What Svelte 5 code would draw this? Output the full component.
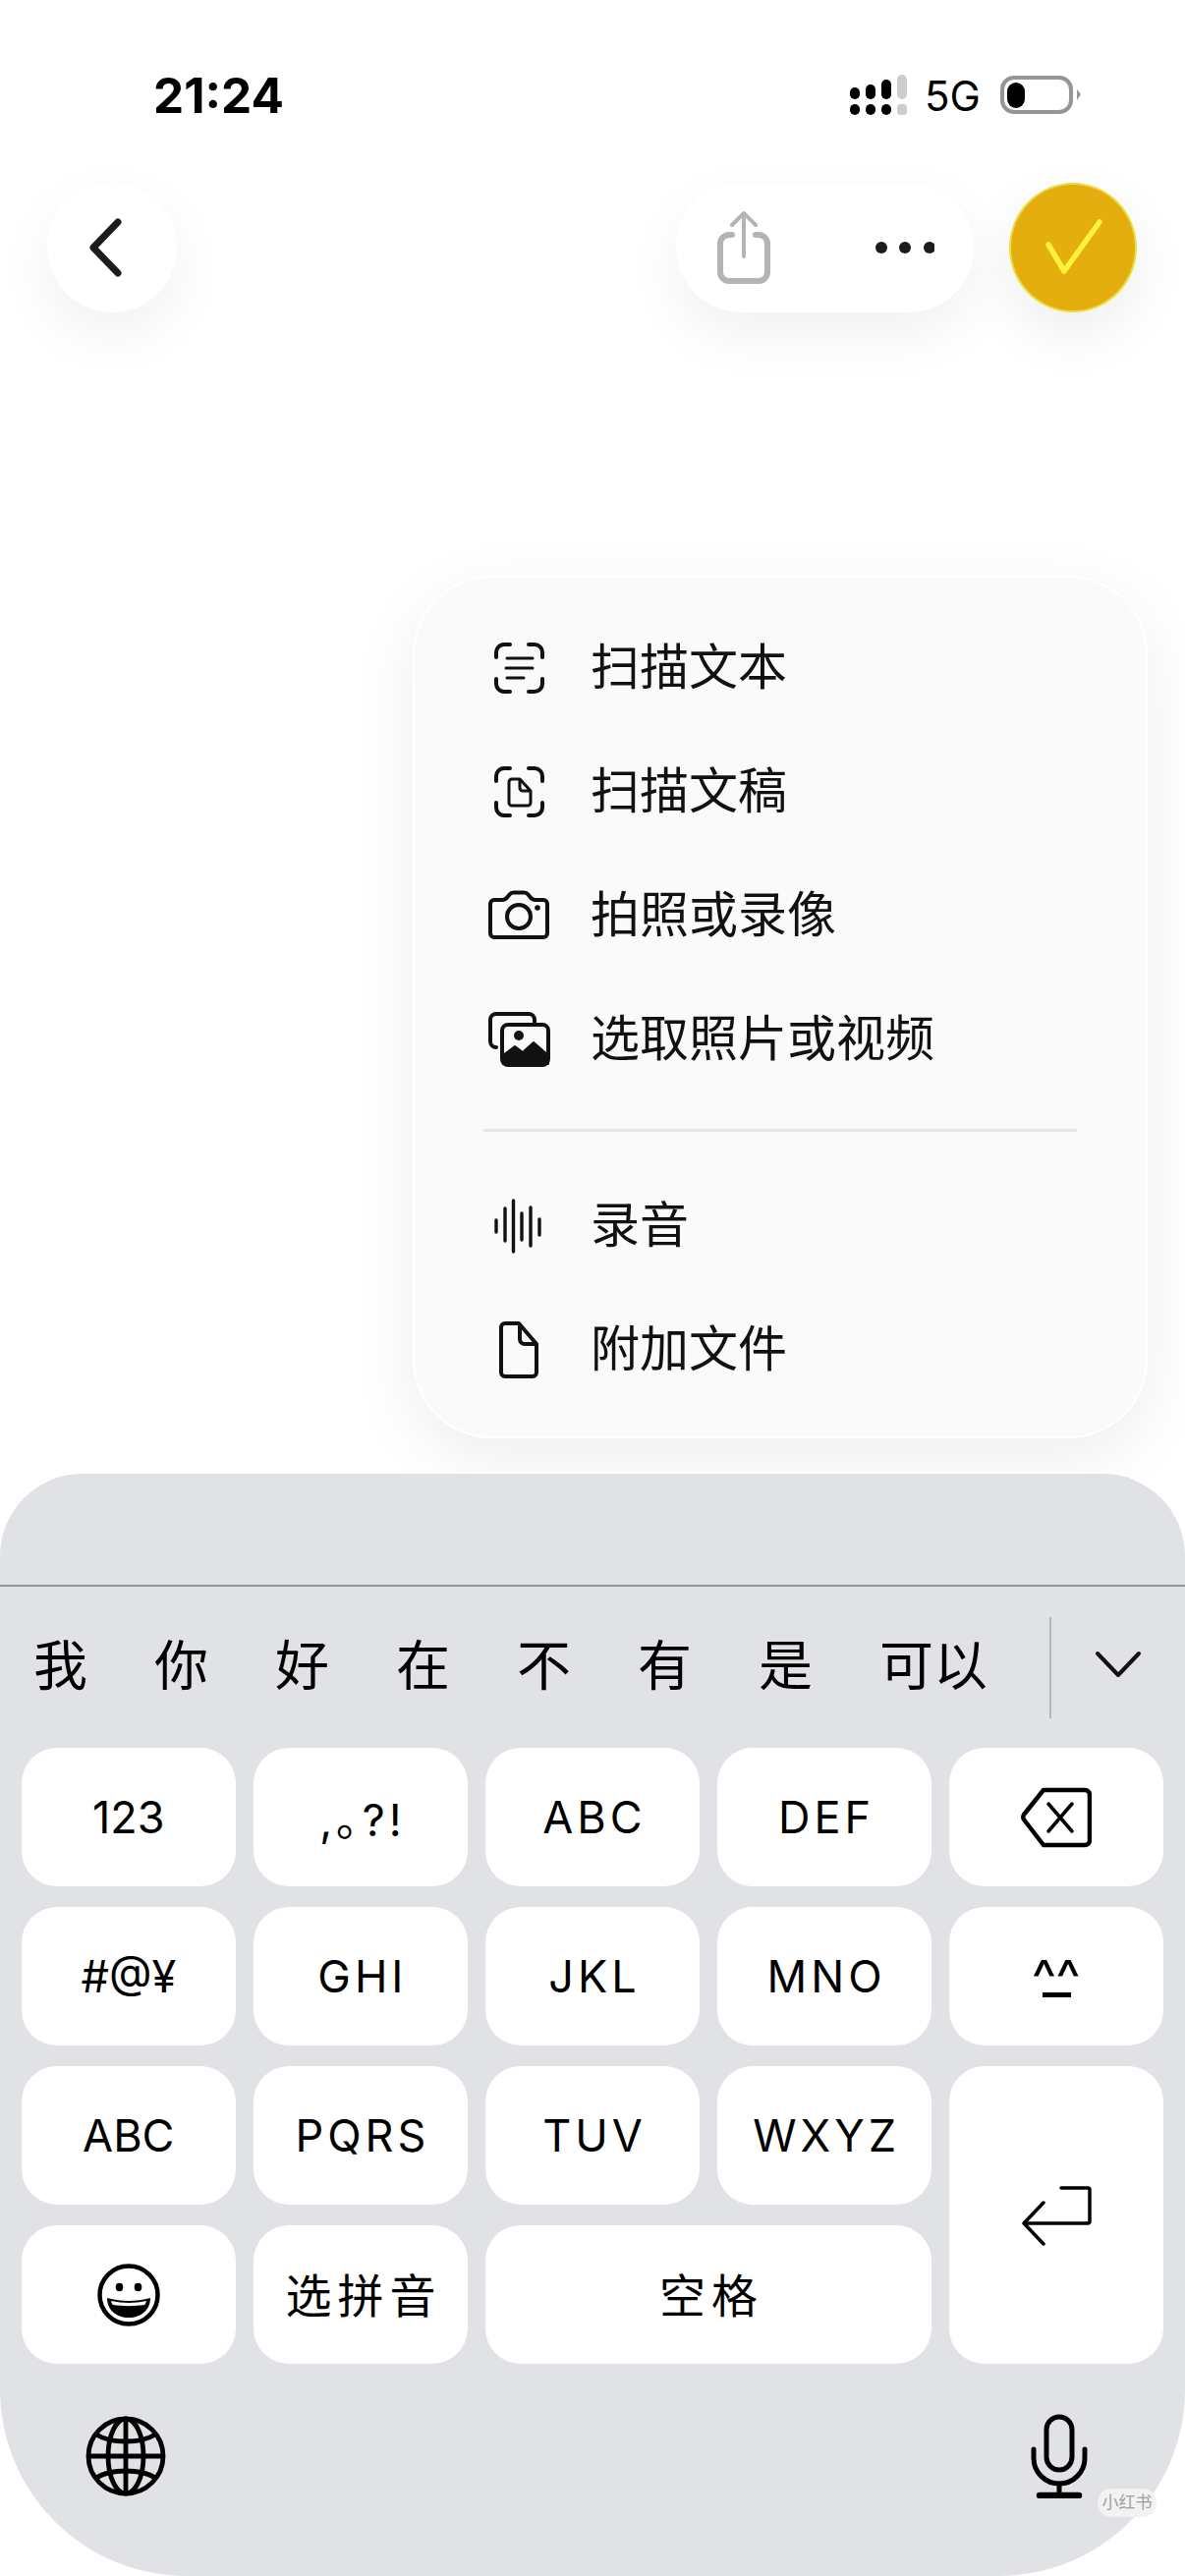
<script>
	const menuTop = [
		{ icon: 'scanText', label: '扫描文本' },
		{ icon: 'scanDoc', label: '扫描文稿' },
		{ icon: 'camera', label: '拍照或录像' },
		{ icon: 'photos', label: '选取照片或视频' }
	];
	const menuBottom = [
		{ icon: 'wave', label: '录音' },
		{ icon: 'file', label: '附加文件' }
	];
	const candidates = ['我', '你', '好', '在', '不', '有', '是', '可以'];
	const row1 = ['123', ',｡?!', 'ABC', 'DEF'];
	const row2 = ['#@¥', 'GHI', 'JKL', 'MNO'];
	const row3 = ['ABC', 'PQRS', 'TUV', 'WXYZ'];
</script>

{#snippet menuIcon(name)}
	<svg class="menu-icon" viewBox="0 0 72 60" fill="none" stroke="#111" stroke-width="3.4" stroke-linecap="round" stroke-linejoin="round">
		{#if name === 'scanText' || name === 'scanDoc'}
			<path d="M13 19v-5a8 8 0 0 1 8-8h6M60 19v-5a8 8 0 0 0-8-8h-6M13 41v5a8 8 0 0 0 8 8h6M60 41v5a8 8 0 0 1-8 8h-6" stroke-width="4" />
			{#if name === 'scanText'}
				<path d="M24 20h26M23 30h27M24 40h17" stroke-width="3" />
			{:else}
				<path d="M29 17h8l11 12v12a3 3 0 0 1-3 3H29a3 3 0 0 1-3-3V20a3 3 0 0 1 3-3zM37 18v8a3 3 0 0 0 3 3h8" stroke-width="3" />
			{/if}
		{:else if name === 'camera'}
			<path d="M11 14h8c3 0 4-1 5.500-3l2-2.500c1-1.200 2.500-2 4-2h11c1.500 0 3 .8 4 2l2 2.500c1.500 2 2.500 3 5.500 3h8a4 4 0 0 1 4 4v30a4 4 0 0 1-4 4H11a4 4 0 0 1-4-4V18a4 4 0 0 1 4-4z" stroke-width="4" />
			<circle cx="36" cy="31" r="12" stroke-width="4" />
			<circle cx="55" cy="22" r="2.800" fill="#111" stroke="none" />
		{:else if name === 'photos'}
			<path d="M13 38a6 6 0 0 1-6-6V10a6 6 0 0 1 6-6h33a6 6 0 0 1 6 6v3" stroke-width="4" />
			<rect x="19" y="15" width="47" height="41" rx="6" stroke-width="4" />
			<path d="M20 55V46l12-9 8 6 11-10 15 13v9z" fill="#111" stroke="#111" stroke-width="2" />
			<circle cx="36" cy="26" r="5" fill="#111" stroke="none" />
		{:else if name === 'wave'}
			<path d="M13 24v12M22 12v33M30.500 4v52M39 17v27M48 11v39M57 23v16" stroke-width="3.400" />
		{:else if name === 'file'}
			<path d="M22 3h14l18 21v29a4 4 0 0 1-4 4H22a4 4 0 0 1-4-4V7a4 4 0 0 1 4-4zM37 4v15a5 5 0 0 0 5 5h12" stroke-width="4" />
		{/if}
	</svg>
{/snippet}

<div class="page">
	<header class="status">
		<span class="time">21:24</span>
		<div class="status-right">
			<svg width="60" height="42" viewBox="0 0 60 42">
				<rect x="0" y="13" width="10" height="12" rx="5" fill="#000" />
				<rect x="0" y="30" width="10" height="11" rx="5" fill="#000" />
				<rect x="16" y="10" width="10" height="15" rx="5" fill="#000" />
				<rect x="16" y="30" width="10" height="11" rx="5" fill="#000" />
				<rect x="32" y="5" width="10" height="20" rx="5" fill="#000" />
				<rect x="32" y="30" width="10" height="11" rx="5" fill="#000" />
				<rect x="48" y="0" width="10" height="25" rx="5" fill="#cdcdcd" />
				<rect x="48" y="30" width="10" height="11" rx="3.500" fill="#cdcdcd" />
			</svg>
			<span class="net">5G</span>
			<svg width="84" height="40" viewBox="0 0 84 40">
				<rect x="2" y="2" width="70" height="35" rx="12" fill="none" stroke="#959595" stroke-width="4" />
				<rect x="7" y="7" width="18" height="26" rx="9" fill="#000" />
				<path d="M78 14l4 5-4 6z" fill="#959595" />
			</svg>
		</div>
	</header>

	<nav class="nav">
		<button class="round" aria-label="返回">
			<svg width="44" height="62" viewBox="0 0 44 62" fill="none" stroke="#1c1c1e" stroke-width="7" stroke-linecap="round" stroke-linejoin="round">
				<path d="M33 5 8 31l25 26" />
			</svg>
		</button>
		<div class="nav-right">
			<div class="pill">
				<svg width="62" height="76" viewBox="0 0 60 76" fill="none" stroke="#b4b4b4" stroke-width="5" stroke-linecap="round" stroke-linejoin="round">
					<path d="M18 25h-3a9 9 0 0 0-9 9v29a9 9 0 0 0 9 9h30a9 9 0 0 0 9-9V34a9 9 0 0 0-9-9h-3" stroke-width="6" />
					<path d="M30 47V4M18 15 30 3l12 12" stroke-width="4" />
				</svg>
				<svg width="60" height="14" viewBox="0 0 60 14" fill="#1c1c1e">
					<circle cx="6" cy="7" r="6" />
					<circle cx="30" cy="7" r="6" />
					<circle cx="55" cy="7" r="6" />
				</svg>
			</div>
			<button class="done" aria-label="完成">
				<svg width="60" height="60" viewBox="0 0 60 60" fill="none" stroke="#fff23a" stroke-width="5.500" stroke-linecap="round" stroke-linejoin="round">
					<path d="M5 27 21 54 57 4" />
				</svg>
			</button>
		</div>
	</nav>

	<section class="menu">
		{#each menuTop as item}
			<div class="menu-row">
				{@render menuIcon(item.icon)}
				<span>{item.label}</span>
			</div>
		{/each}
		<div class="divider"></div>
		{#each menuBottom as item}
			<div class="menu-row">
				{@render menuIcon(item.icon)}
				<span>{item.label}</span>
			</div>
		{/each}
	</section>

	<section class="keyboard">
		<div class="kb-top"></div>
		<div class="candidates">
			<div class="cand-list">
				{#each candidates as c}
					<span>{c}</span>
				{/each}
			</div>
			<div class="cand-more">
				<svg width="48" height="28" viewBox="0 0 48 28" fill="none" stroke="#111" stroke-width="4" stroke-linecap="round" stroke-linejoin="round">
					<path d="M3 3 24 25 45 3" />
				</svg>
			</div>
		</div>

		<div class="keys">
			{#each row1 as k, i}
				<div class="key" class:spaced={i > 0}>{k}</div>
			{/each}
			<div class="key" aria-label="删除">
				<svg width="72" height="62" viewBox="0 0 72 62" fill="none" stroke="#000" stroke-linejoin="round">
					<path d="M23 3h42a5 5 0 0 1 5 5v46a5 5 0 0 1-5 5H23L3 33a5 5 0 0 1 0-5z" stroke-width="4.500" />
					<path d="M28 17l24 28M52 17 28 45" stroke-width="3.500" stroke-linecap="round" />
				</svg>
			</div>

			{#each row2 as k, i}
				<div class="key" class:spaced={i > 0}>{k}</div>
			{/each}
			<div class="key kaomoji">
				<span>^^</span>
				<i></i>
			</div>

			{#each row3 as k, i}
				<div class="key" class:spaced={i > 0}>{k}</div>
			{/each}
			<div class="key enter" aria-label="换行">
				<svg width="72" height="62" viewBox="0 0 72 62" fill="none" stroke="#000" stroke-width="3.500" stroke-linecap="round" stroke-linejoin="round">
					<path d="M41 3h27a2 2 0 0 1 2 2v32a2 2 0 0 1-2 2H3M23 18 3 39l20 21" />
				</svg>
			</div>

			<div class="key" aria-label="表情">
				<svg width="66" height="68" viewBox="0 0 66 68">
					<circle cx="33" cy="34" r="29.500" fill="#fff" stroke="#000" stroke-width="4.500" />
					<ellipse cx="23.500" cy="26" rx="3.800" ry="4.200" fill="#000" />
					<ellipse cx="42.500" cy="26" rx="3.800" ry="4.200" fill="#000" />
					<path d="M11 37c7 2 15 3 22 3s15-1 22-3c0 12-9 20-22 20S11 49 11 37z" fill="#000" />
					<path d="M15 40c6 1 12 2 18 2s12-1 18-2c-.5 2-1 3-2 4-10 1.500-22 1.500-32 0-1-1-1.500-2-2-4z" fill="#fff" />
				</svg>
			</div>
			<div class="key cn spaced"><span>选拼音</span></div>
			<div class="key wide cn spaced"><span>空格</span></div>
		</div>

		<div class="kb-bottom">
			<svg width="84" height="84" viewBox="0 0 84 84" fill="none" stroke="#000" stroke-width="4.800">
				<circle cx="42" cy="42" r="38" />
				<ellipse cx="42" cy="42" rx="18" ry="38" />
				<path d="M42 4v76M4 42h76M12 20c8 5 18 7 30 7s22-2 30-7M12 64c8-5 18-7 30-7s22 2 30 7" />
			</svg>
			<svg width="60" height="86" viewBox="0 0 60 86" fill="none" stroke="#000" stroke-linecap="round">
				<rect x="17" y="3" width="26" height="54" rx="13" stroke-width="5" />
				<path d="M4 36v9a26 26 0 0 0 52 0v-9" stroke-width="5" />
				<path d="M30 71v11" stroke-width="5" />
				<path d="M10 83h40" stroke-width="6.500" />
			</svg>
		</div>
		<div class="mark">小红书</div>
	</section>
</div>

<style>
	:global(body) {
		margin: 0;
		background: #fff;
	}

	.page {
		width: 1206px;
		height: 2622px;
		overflow: hidden;
		display: flex;
		flex-direction: column;
		background: #fff;
		color: #000;
		font-family: Inter, "Noto Sans CJK SC", sans-serif;
	}

	.status {
		height: 186px;
		flex: none;
		box-sizing: border-box;
		padding: 8px 104px 0 156px;
		display: flex;
		align-items: center;
		justify-content: space-between;
	}

	.time {
		font-size: 49.500px;
		font-weight: 700;
	}

	.status-right {
		display: flex;
		align-items: center;
		gap: 16px;
	}

	.net {
		font-size: 42px;
		font-weight: 400;
		width: 61px;
	}

	.nav {
		height: 132px;
		flex: none;
		box-sizing: border-box;
		padding: 0 49px 0 48px;
		display: flex;
		justify-content: space-between;
	}

	.nav-right {
		display: flex;
		gap: 36px;
	}

	button {
		border: none;
		padding: 0;
		display: flex;
		align-items: center;
		justify-content: center;
	}

	.round {
		width: 132px;
		height: 132px;
		border-radius: 50%;
		background: #fff;
		box-shadow: 0 22px 60px rgba(0, 0, 0, 0.06);
	}

	.round svg {
		margin-right: 10px;
	}

	.pill {
		width: 303px;
		box-sizing: border-box;
		padding: 0 40px 0 38px;
		border-radius: 66px;
		background: #fff;
		box-shadow: 0 22px 60px rgba(0, 0, 0, 0.06);
		display: flex;
		align-items: center;
		justify-content: space-between;
	}

	.done {
		width: 130px;
		height: 132px;
		box-sizing: border-box;
		border-radius: 50%;
		background: #e3ae0e;
		border: 2px solid #eadf45;
		box-shadow: 0 22px 60px rgba(0, 0, 0, 0.07);
	}

	.menu {
		margin: 268px 38px 0 auto;
		width: 748px;
		height: 878px;
		box-sizing: border-box;
		padding: 29px 70px;
		border-radius: 80px;
		background: #fafafa;
		border: 2px solid #fff;
		box-shadow: 0 20px 70px rgba(0, 0, 0, 0.07);
	}

	.menu-row {
		height: 126px;
		display: flex;
		align-items: center;
		gap: 37px;
		font-size: 50px;
		color: #111;
	}

	.menu-row span {
		padding-bottom: 10px;
	}

	.menu-icon {
		width: 72px;
		height: 60px;
		flex: none;
	}

	.divider {
		height: 3px;
		margin: 28px 0 33px;
		background: #e6e6e6;
		border-radius: 2px;
	}

	.keyboard {
		position: relative;
		margin-top: 36px;
		flex: 1;
		box-sizing: border-box;
		background: #e0e2e5;
		border-radius: 84px 84px 190px 190px;
		box-shadow: 0 -2px 0 #fff;
	}

	.kb-top {
		height: 113px;
		border-bottom: 2px solid #94959a;
	}

	.candidates {
		height: 164px;
		display: flex;
		align-items: center;
		justify-content: space-between;
	}

	.cand-list {
		display: flex;
		gap: 68px;
		padding-left: 34px;
		padding-bottom: 12px;
		font-size: 55px;
		color: #000;
	}

	.cand-more {
		width: 138px;
		height: 103px;
		box-sizing: border-box;
		border-left: 2px solid #b4b6ba;
		display: flex;
		align-items: center;
		justify-content: center;
		padding-bottom: 6px;
	}

	.keys {
		padding: 0 22px;
		display: grid;
		grid-template-columns: repeat(5, 1fr);
		grid-auto-rows: 141px;
		gap: 21px 18.500px;
	}

	.key {
		background: #fff;
		border-radius: 36px;
		display: flex;
		align-items: center;
		justify-content: center;
		font-size: 45px;
		color: #000;
	}

	.spaced {
		letter-spacing: 4px;
		padding-left: 4px;
	}

	.cn {
		font-size: 47px;
		letter-spacing: 6px;
		padding-left: 6px;
	}

	.cn span {
		padding-bottom: 5px;
	}

	.wide {
		grid-column: span 2;
	}

	.enter {
		grid-column: 5;
		grid-row: 3 / span 2;
	}

	.kaomoji {
		flex-direction: column;
	}

	.kaomoji span {
		font-size: 54px;
		line-height: 28px;
		letter-spacing: -1px;
		margin: 10px 2px 0 0;
	}

	.kaomoji i {
		display: block;
		width: 29px;
		height: 5px;
		background: #000;
	}

	.kb-bottom {
		margin-top: 51px;
		padding: 0 98px 0 86px;
		display: flex;
		align-items: center;
		justify-content: space-between;
	}

	.mark {
		position: absolute;
		right: 29px;
		top: 1033px;
		width: 60px;
		height: 29px;
		border-radius: 14px;
		background: #f2f2f3;
		color: #a0a0a0;
		font-size: 17px;
		line-height: 29px;
		text-align: center;
	}
</style>
